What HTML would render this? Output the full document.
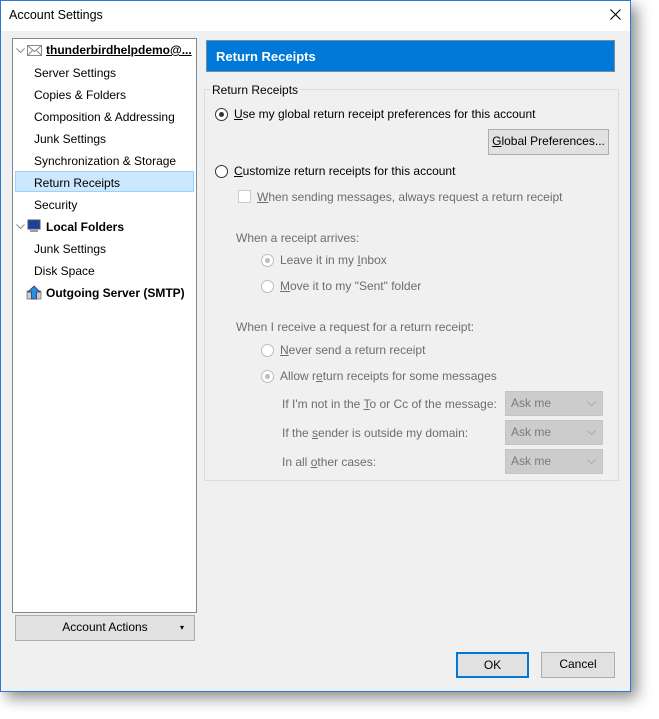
<!DOCTYPE html><html><head><style>
body{margin:0;width:659px;height:719px;background:#fff;position:relative;overflow:hidden;font-family:"Liberation Sans",sans-serif;font-size:12px;color:#000}
.a{position:absolute;white-space:nowrap}
.win{position:absolute;left:0;top:0;width:631px;height:692px;outline:1px solid #2b79d0;outline-offset:-1px;background:#f0f0f0;box-shadow:6px 6px 14px rgba(0,0,0,.45)}
.tb{position:absolute;left:1px;top:1px;width:629px;height:30px;background:#fff}
.g{color:#6d6d6d}
.rad{position:absolute;width:11px;height:11px;border:1px solid #333;border-radius:50%;background:#fff}
.rad.d{border-color:#bcbcbc}
.dot{position:absolute;left:3px;top:3px;width:5px;height:5px;border-radius:50%;background:#333}
.rad.d .dot{background:#bcbcbc}
.sel{position:absolute;left:505px;width:96px;height:23px;background:#cccccc;border:1px solid #c4c4c4;color:#7a7a7a}
.sel span{position:absolute;left:5px;top:4px}
.sel svg{position:absolute;right:6px;top:9px}
.btn{position:absolute;background:#e1e1e1;border:1px solid #adadad;text-align:center;line-height:23px}
u{text-decoration:underline}
.chev{position:absolute}
</style></head><body>
<div class="win">
<div class="tb"></div>
<div class="a" style="left:9px;top:8px;font-size:12.5px">Account Settings</div>
<svg class="a" style="left:610px;top:9px" width="11" height="11"><path d="M.5 .5l10 10M10.5 .5l-10 10" stroke="#000" stroke-width="1.1"/></svg>
<div class="a" style="left:12px;top:38px;width:183px;height:573px;background:#fff;border:1px solid #828790"></div>
<div class="a" style="left:15px;top:171px;width:179px;height:21px;background:#cce8ff;border:1px solid #99d1ff;box-sizing:border-box"></div>
<svg class="chev" style="left:16px;top:48px" width="9" height="6"><path d="M.5 .5l4 4 4-4" fill="none" stroke="#888"/></svg>
<svg class="a" style="left:27px;top:45px" width="15" height="11"><rect x=".5" y=".5" width="14" height="10" fill="#fff" stroke="#888"/><path d="M.5 .5l7 6 7-6M.5 10.5l5-5M14.5 10.5l-5-5" fill="none" stroke="#888"/></svg>
<div class="a" style="left:46px;top:43px;font-weight:bold;text-decoration:underline">thunderbirdhelpdemo@...</div>
<div class="a" style="left:34px;top:66px">Server Settings</div>
<div class="a" style="left:34px;top:88px">Copies &amp; Folders</div>
<div class="a" style="left:34px;top:110px">Composition &amp; Addressing</div>
<div class="a" style="left:34px;top:132px">Junk Settings</div>
<div class="a" style="left:34px;top:154px">Synchronization &amp; Storage</div>
<div class="a" style="left:34px;top:176px">Return Receipts</div>
<div class="a" style="left:34px;top:198px">Security</div>
<svg class="chev" style="left:16px;top:224px" width="9" height="6"><path d="M.5 .5l4 4 4-4" fill="none" stroke="#888"/></svg>
<svg class="a" style="left:27px;top:219px" width="14" height="14"><rect x="1" y="1" width="12" height="9" fill="#1a3fa8" stroke="#555"/><rect x="3" y="11" width="8" height="2" fill="#999"/></svg>
<div class="a" style="left:46px;top:220px;font-weight:bold">Local Folders</div>
<div class="a" style="left:34px;top:242px">Junk Settings</div>
<div class="a" style="left:34px;top:264px">Disk Space</div>
<svg class="a" style="left:26px;top:285px" width="16" height="15"><rect x="1" y="6" width="14" height="8" fill="#ccc" stroke="#777" stroke-width=".8"/><path d="M8 1L2 7h3.5v7h5V7H14z" fill="#2a8ee0" stroke="#335" stroke-width=".8"/></svg>
<div class="a" style="left:46px;top:286px;font-weight:bold">Outgoing Server (SMTP)</div>
<div class="btn" style="left:15px;top:615px;width:178px;height:24px">Account Actions <span style="position:absolute;right:10px;font-size:8px">▾</span></div>
<div class="a" style="left:206px;top:40px;width:407px;height:30px;background:#0078d7;border:1px solid #6f8fa8"></div>
<div class="a" style="left:216px;top:49px;color:#fff;font-weight:bold;font-size:13px">Return Receipts</div>
<div class="a" style="left:204px;top:89px;width:413px;height:390px;border:1px solid #dcdcdc"></div>
<div class="a" style="left:210px;top:83px;background:#f0f0f0;padding:0 2px">Return Receipts</div>
<div class="rad" style="left:215px;top:108px"><div class="dot"></div></div>
<div class="a" style="left:234px;top:107px"><u>U</u>se my global return receipt preferences for this account</div>
<div class="btn" style="left:488px;top:129px;width:119px;height:24px"><u>G</u>lobal Preferences...</div>
<div class="rad" style="left:215px;top:165px"></div>
<div class="a" style="left:234px;top:164px"><u>C</u>ustomize return receipts for this account</div>
<div class="a" style="left:238px;top:190px;width:11px;height:11px;border:1px solid #ccc;background:#fff"></div>
<div class="a g" style="left:257px;top:190px"><u>W</u>hen sending messages, always request a return receipt</div>
<div class="a g" style="left:236px;top:231px">When a receipt arrives:</div>
<div class="rad d" style="left:261px;top:254px"><div class="dot"></div></div>
<div class="a g" style="left:280px;top:253px">Leave it in my <u>I</u>nbox</div>
<div class="rad d" style="left:261px;top:280px"></div>
<div class="a g" style="left:280px;top:279px"><u>M</u>ove it to my "Sent" folder</div>
<div class="a g" style="left:236px;top:320px">When I receive a request for a return receipt:</div>
<div class="rad d" style="left:261px;top:344px"></div>
<div class="a g" style="left:280px;top:343px"><u>N</u>ever send a return receipt</div>
<div class="rad d" style="left:261px;top:370px"><div class="dot"></div></div>
<div class="a g" style="left:280px;top:369px">Allow r<u>e</u>turn receipts for some messages</div>
<div class="a g" style="left:282px;top:397px">If I'm not in the <u>T</u>o or Cc of the message:</div>
<div class="sel" style="top:391px"><span>Ask me</span><svg width="9" height="5"><path d="M.5 .5l4 4 4-4" fill="none" stroke="#aaa"/></svg></div>
<div class="a g" style="left:282px;top:426px">If the <u>s</u>ender is outside my domain:</div>
<div class="sel" style="top:420px"><span>Ask me</span><svg width="9" height="5"><path d="M.5 .5l4 4 4-4" fill="none" stroke="#aaa"/></svg></div>
<div class="a g" style="left:282px;top:455px">In all <u>o</u>ther cases:</div>
<div class="sel" style="top:449px"><span>Ask me</span><svg width="9" height="5"><path d="M.5 .5l4 4 4-4" fill="none" stroke="#aaa"/></svg></div>
<div class="btn" style="left:456px;top:652px;width:69px;height:22px;border:2px solid #0078d7">OK</div>
<div class="btn" style="left:541px;top:652px;width:72px;height:24px">Cancel</div>
</div>
</body></html>
